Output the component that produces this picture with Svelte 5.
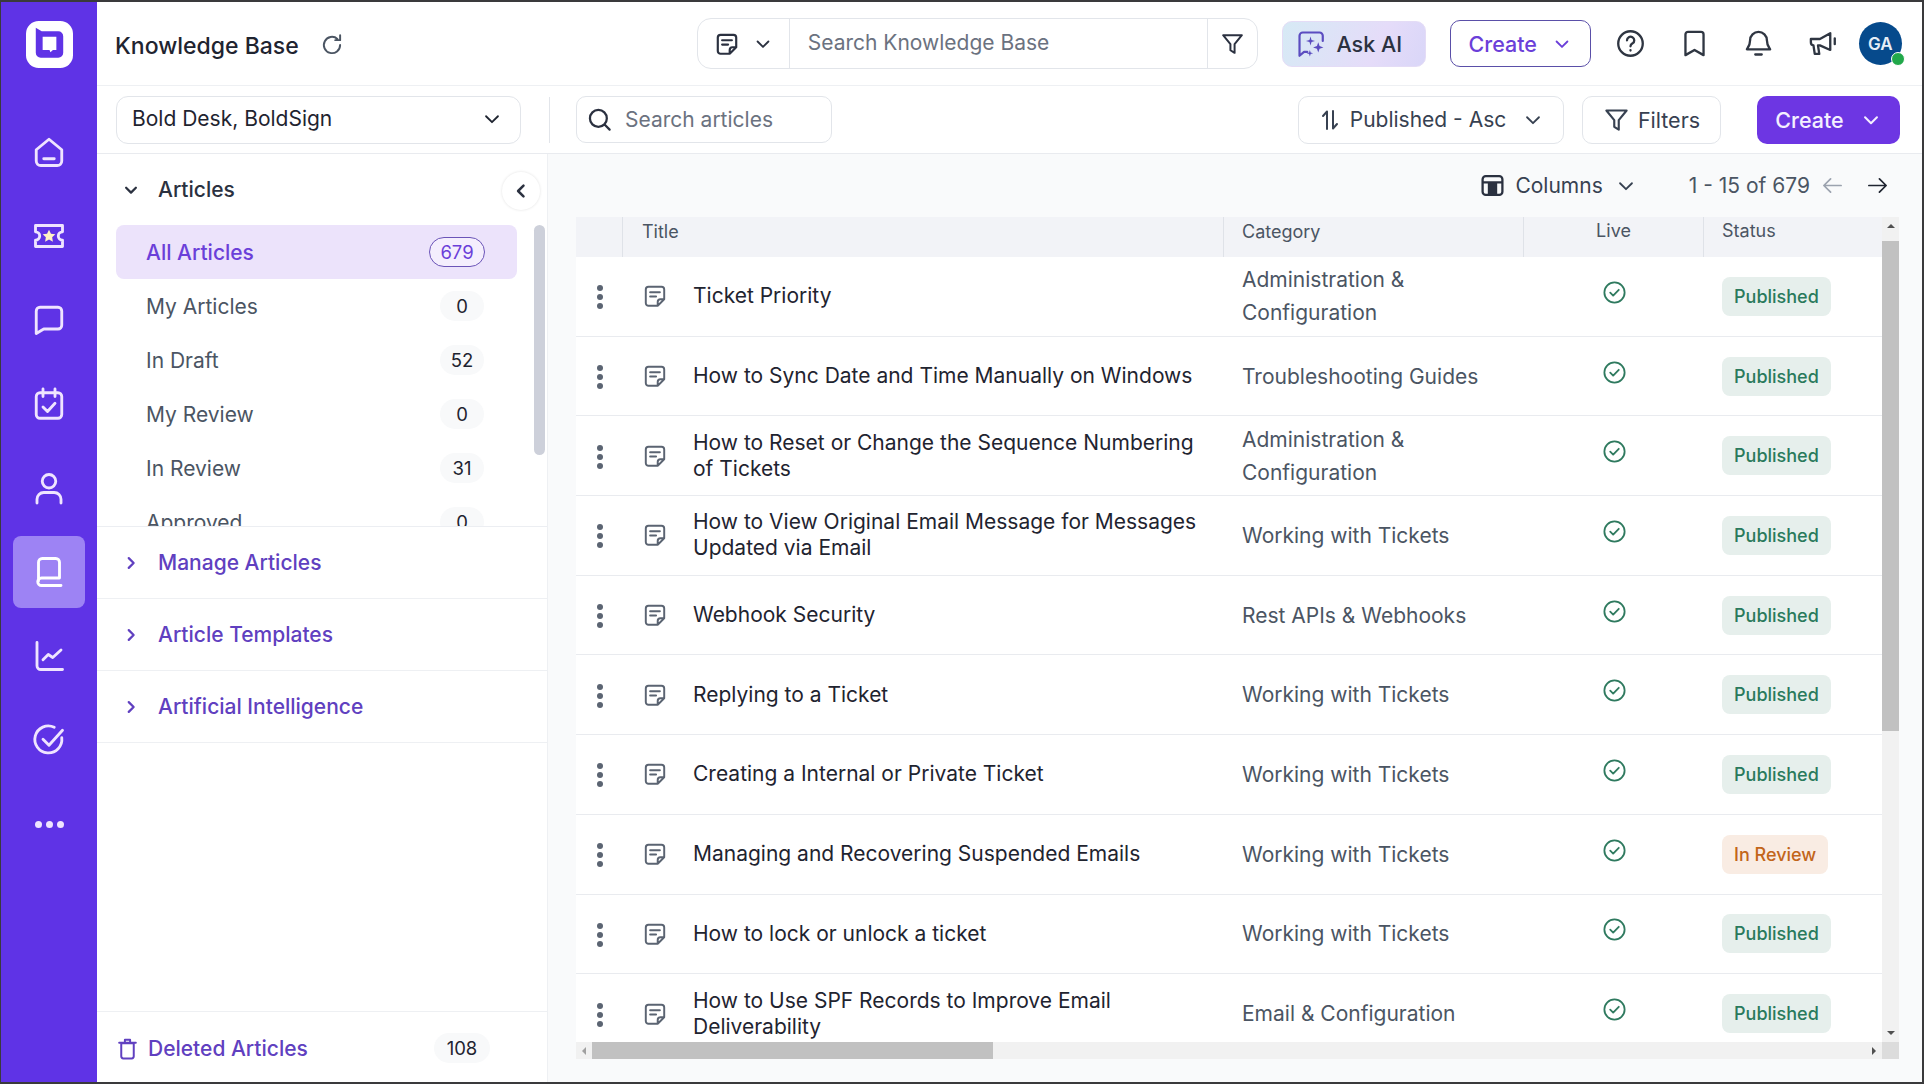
<script>
  // stroke icon paths, 24 unit box
  const paths = {
    home: "M3.5 10.5 12 3.5l8.5 7V18a3 3 0 0 1-3 3h-11a3 3 0 0 1-3-3zM8.5 16.5h7",
    ticket: "M3 5h18v4.2a2.8 2.8 0 0 0 0 5.6V19H3v-4.2a2.8 2.8 0 0 0 0-5.6z",
    chat: "M6 3.5h12A2.5 2.5 0 0 1 20.5 6v9.5A2.5 2.5 0 0 1 18 18H8.5l-5 3V6A2.5 2.5 0 0 1 6 3.5z",
    calendar: "M6 4.5h12A2.5 2.5 0 0 1 20.5 7v12a2.5 2.5 0 0 1-2.5 2.5H6A2.5 2.5 0 0 1 3.5 19V7A2.5 2.5 0 0 1 6 4.5zM8 2v5M16 2v5M8 14l3 3 5-5.5",
    user: "M12 3a4.5 4.5 0 1 1 0 9 4.5 4.5 0 0 1 0-9zM4 22v-2.5A4.5 4.5 0 0 1 8.5 15h7a4.5 4.5 0 0 1 4.5 4.5V22",
    book: "M5 18V5.5A2.5 2.5 0 0 1 7.5 3h9A2.5 2.5 0 0 1 19 5.5V16H7a2.5 2.5 0 0 0 0 5h13",
    chart: "M4 3v15.5A2.5 2.5 0 0 0 6.5 21H21M8 14.5l3.5-3.5 3 2L20 8",
    done: "M20.5 10.5a9 9 0 1 1-5-7M8 11.5l4 4 9-10",
    refresh: "M19.5 12a7.5 7.5 0 1 1-2.5-5.6M19.5 3v4.5H15",
    note: "M6 3.5h12A2.5 2.5 0 0 1 20.5 6v9l-6 6H6A2.5 2.5 0 0 1 3.5 18.5V6A2.5 2.5 0 0 1 6 3.5zM7.5 8.5h9M7.5 12.5h5.5M14.5 21v-3.5A2.5 2.5 0 0 1 17 15h3.5",
    down: "M5.5 9l6.5 6.5L18.5 9",
    right: "M9 5.5l6.5 6.5L9 18.5",
    left: "M15 5.5L8.5 12l6.5 6.5",
    funnel: "M3 4h18l-7 8.5V21l-4-2.5v-6z",
    search: "M11 3.5a7.5 7.5 0 1 1 0 15 7.5 7.5 0 0 1 0-15zM16.5 16.5 21 21",
    help: "M12 2.5a9.5 9.5 0 1 1 0 19 9.5 9.5 0 0 1 0-19zM9.3 9.5a2.8 2.8 0 1 1 4.3 2.4c-1 .6-1.6 1.2-1.6 2.3M12 17.2v.3",
    bookmark: "M7 3h10a2 2 0 0 1 2 2v16l-7-4-7 4V5a2 2 0 0 1 2-2z",
    bell: "M12 3a6.5 6.5 0 0 1 6.5 6.5c0 4 1.5 5.5 2.5 7H3c1-1.5 2.5-3 2.5-7A6.5 6.5 0 0 1 12 3zM9.5 20.5h5",
    megaphone: "M3 8.5h7L18 4v13l-8-3.5H8.5l1 6.5H6l-1-6.5H5a2.5 2.5 0 0 1-2-2.5zM21.5 8v4.5",
    sort: "M9 21V3.5L5 8M15 3v17.5l4-4.5",
    back: "M21 12H3.5M10 5l-7 7 7 7",
    forward: "M3 12h17.5M14 5l7 7-7 7",
    trash: "M6 7h12v12.5a2 2 0 0 1-2 2H8a2 2 0 0 1-2-2zM4 6.5h16M9.5 6V3.5h5V6",
    live: "M12 3a9 9 0 1 1 0 18 9 9 0 0 1 0-18zM8.2 12.2l2.6 2.6 5-5.2",
    askai: "M6 3.5h13A2.5 2.5 0 0 1 21.5 6v4M9.5 18.5H7l-3.5 3V6A2.5 2.5 0 0 1 6 3.5"
  };

  const rail = [
    { icon: "home" }, { icon: "ticket" }, { icon: "chat" }, { icon: "calendar" },
    { icon: "user" }, { icon: "book", active: true }, { icon: "chart" }, { icon: "done" }
  ];

  const folders = [
    { label: "All Articles", count: 679, active: true },
    { label: "My Articles", count: 0 },
    { label: "In Draft", count: 52 },
    { label: "My Review", count: 0 },
    { label: "In Review", count: 31 },
    { label: "Approved", count: 0 }
  ];

  const sections = ["Manage Articles", "Article Templates", "Artificial Intelligence"];

  const ADMIN = "Administration & Configuration";
  const TICKETS = "Working with Tickets";
  const rows = [
    { title: "Ticket Priority", category: ADMIN, status: "Published" },
    { title: "How to Sync Date and Time Manually on Windows", category: "Troubleshooting Guides", status: "Published" },
    { title: "How to Reset or Change the Sequence Numbering of Tickets", category: ADMIN, status: "Published" },
    { title: "How to View Original Email Message for Messages Updated via Email", category: TICKETS, status: "Published" },
    { title: "Webhook Security", category: "Rest APIs & Webhooks", status: "Published" },
    { title: "Replying to a Ticket", category: TICKETS, status: "Published" },
    { title: "Creating a Internal or Private Ticket", category: TICKETS, status: "Published" },
    { title: "Managing and Recovering Suspended Emails", category: TICKETS, status: "In Review" },
    { title: "How to lock or unlock a ticket", category: TICKETS, status: "Published" },
    { title: "How to Use SPF Records to Improve Email Deliverability", category: "Email & Configuration", status: "Published" }
  ];
</script>

{#snippet icon(name, size = 24, width = 2)}
  <svg class="icon" viewBox="0 0 24 24" style="width:{size}px;height:{size}px" fill="none" stroke="currentColor" stroke-width={width} stroke-linecap="round" stroke-linejoin="round">
    <path d={paths[name]} />
    {#if name === "ticket"}
      <path d="M12 7.8l1.3 2.7 2.9.4-2.1 2 .5 2.9-2.6-1.4-2.6 1.4.5-2.9-2.1-2 2.9-.4z" fill="#fff3c4" stroke="none" />
    {/if}
    {#if name === "askai"}
      <path d="M12 6.5l.8 2.7 2.7.8-2.7.8-.8 2.7-.8-2.7-2.7-.8 2.7-.8zM18 11l1 3 3 1-3 1-1 3-1-3-3-1 3-1zM11.5 17l.6 1.9 1.9.6-1.9.6-.6 1.9-.6-1.9-1.9-.6 1.9-.6z" fill="currentColor" stroke="none" />
    {/if}
  </svg>
{/snippet}

<div class="screen">
  <nav class="rail">
    <svg class="logo" viewBox="0 0 48 48">
      <rect width="48" height="48" rx="13" fill="#fff" />
      <path d="M10 7l6 3.5h17A5 5 0 0 1 38 15.5v17a5 5 0 0 1-5 5H15a5 5 0 0 1-5-5z" fill="#5f33e6" />
      <path d="M17 16h14v13.5h-3.5L25 32l-1-2.5h-7z" fill="#fff" />
    </svg>
    <div class="rail-list">
      {#each rail as item}
        <div class="rail-item" class:active={item.active}>{@render icon(item.icon, 36, 1.9)}</div>
      {/each}
      <div class="rail-item more"><i></i><i></i><i></i></div>
    </div>
  </nav>

  <div class="main">
    <header class="topbar">
      <div class="page-title">Knowledge Base</div>
      <span class="refresh">{@render icon("refresh", 26, 1.8)}</span>

      <div class="global-search">
        <div class="scope">
          {@render icon("note", 26, 2)}
          {@render icon("down", 20, 2.2)}
        </div>
        <div class="global-input">Search Knowledge Base</div>
        <div class="scope-filter">{@render icon("funnel", 25, 1.9)}</div>
      </div>

      <div class="ask-ai">
        <span class="ask-icon">{@render icon("askai", 31, 1.7)}</span>
        Ask AI
      </div>
      <div class="create-outline">Create {@render icon("down", 20, 2.2)}</div>

      <div class="top-icons">
        {@render icon("help", 31, 1.8)}
        {@render icon("bookmark", 31, 1.8)}
        {@render icon("bell", 31, 1.8)}
        {@render icon("megaphone", 31, 1.8)}
        <div class="avatar">GA<span class="online"></span></div>
      </div>
    </header>

    <div class="filterbar">
      <div class="brand-select">
        <span>Bold Desk, BoldSign</span>
        {@render icon("down", 22, 2)}
      </div>
      <div class="bar-divider"></div>
      <div class="article-search">
        {@render icon("search", 27, 2)}
        <span>Search articles</span>
      </div>
      <div class="sort-btn">
        {@render icon("sort", 24, 2)}
        <span>Published - Asc</span>
        {@render icon("down", 22, 2)}
      </div>
      <div class="filters-btn">
        {@render icon("funnel", 27, 1.9)}
        <span>Filters</span>
      </div>
      <div class="create-btn">Create {@render icon("down", 22, 2.2)}</div>
    </div>

    <div class="workspace">
      <aside class="pane">
        <div class="pane-head">
          <span class="caret">{@render icon("down", 18, 3)}</span>
          <span>Articles</span>
          <span class="collapse">{@render icon("left", 20, 3)}</span>
        </div>

        <div class="folders">
          <div class="folder-list">
            {#each folders as f}
              <div class="folder" class:active={f.active}>
                <span>{f.label}</span>
                <span class="count">{f.count}</span>
              </div>
            {/each}
          </div>
          <div class="pane-scroll"><div class="pane-thumb"></div></div>
        </div>

        {#each sections as s}
          <div class="section">
            <span class="caret">{@render icon("right", 18, 3)}</span>
            <span>{s}</span>
          </div>
        {/each}

        <div class="deleted">
          {@render icon("trash", 25, 1.9)}
          <span class="deleted-label">Deleted Articles</span>
          <span class="count">108</span>
        </div>
      </aside>

      <section class="content">
        <div class="table-tools">
          <svg class="columns-icon" viewBox="0 0 24 24">
            <rect x="2.5" y="3" width="19" height="18" rx="3" fill="none" stroke="currentColor" stroke-width="2.2" />
            <path d="M2.5 9h19M8.5 9v12M15.5 9v12" stroke="currentColor" stroke-width="2" />
            <rect x="8.5" y="9" width="7" height="12" fill="currentColor" />
          </svg>
          <span class="columns-label">Columns</span>
          {@render icon("down", 22, 2)}
          <span class="pager">1 - 15 of 679</span>
          <span class="arrow off">{@render icon("back", 23, 1.8)}</span>
          <span class="arrow">{@render icon("forward", 23, 1.8)}</span>
        </div>

        <div class="table-frame">
          <div class="table-body">
            <div class="table">
              <div class="row head">
                <div class="cell kebab"></div>
                <div class="cell title">Title</div>
                <div class="cell category">Category</div>
                <div class="cell live">Live</div>
                <div class="cell status">Status</div>
              </div>
              {#each rows as r}
                <div class="row">
                  <div class="cell kebab"><i></i><i></i><i></i></div>
                  <div class="cell title">
                    <span class="note">{@render icon("note", 26, 1.8)}</span>
                    <span class="title-text">{r.title}</span>
                  </div>
                  <div class="cell category">{r.category}</div>
                  <div class="cell live">{@render icon("live", 27, 1.6)}</div>
                  <div class="cell status">
                    <span class="badge" class:review={r.status === "In Review"}>{r.status}</span>
                  </div>
                </div>
              {/each}
            </div>
            <div class="vscroll">
              <span class="tri up"></span>
              <div class="vthumb"></div>
              <span class="tri dn"></span>
            </div>
          </div>
          <div class="hscroll">
            <span class="tri lf"></span>
            <div class="hthumb"></div>
            <span class="tri rt"></span>
            <div class="corner"></div>
          </div>
        </div>
      </section>
    </div>
  </div>
</div>

<style>
  :global(body) {
    margin: 0;
    background: #fff;
    font-family: Inter, "Liberation Sans", sans-serif;
  }
  .icon {
    flex: none;
    display: block;
  }
  .screen {
    display: flex;
    width: 1924px;
    height: 1084px;
    box-sizing: border-box;
    border: solid #3a3a3c;
    border-width: 2px 2px 2px 1px;
    overflow: hidden;
    color: #1f2937;
  }

  /* left rail */
  .rail {
    width: 96px;
    flex: none;
    background: #5f33e6;
    display: flex;
    flex-direction: column;
    align-items: center;
    padding-top: 19px;
    box-sizing: border-box;
  }
  .logo {
    width: 47px;
    height: 47px;
    flex: none;
  }
  .rail-list {
    display: flex;
    flex-direction: column;
    gap: 12px;
    margin-top: 48px;
  }
  .rail-item {
    width: 72px;
    height: 72px;
    border-radius: 8px;
    display: flex;
    align-items: center;
    justify-content: center;
    color: #efe4ff;
  }
  .rail-item.active {
    background: #9d83f4;
    color: #fff;
  }
  .more {
    gap: 4px;
  }
  .more i {
    width: 7px;
    height: 7px;
    border-radius: 50%;
    background: #efe4ff;
  }

  .main {
    flex: 1;
    min-width: 0;
    display: flex;
    flex-direction: column;
  }

  /* top bar */
  .topbar {
    height: 84px;
    flex: none;
    display: flex;
    align-items: center;
    padding-left: 18px;
    border-bottom: 1px solid #eef0f3;
    box-sizing: border-box;
  }
  .page-title {
    font-size: 23px;
    font-weight: 500;
    color: #1f2430;
    margin-top: 4px;
  }
  .refresh {
    margin-left: 20px;
    margin-top: 3px;
    color: #4b5563;
  }
  .global-search {
    margin-left: 352px;
    width: 561px;
    height: 51px;
    flex: none;
    display: flex;
    border: 1px solid #e2e5ea;
    border-radius: 14px;
    box-sizing: border-box;
  }
  .scope {
    width: 91px;
    display: flex;
    align-items: center;
    justify-content: center;
    gap: 13px;
    color: #2b3140;
    border-right: 1px solid #e2e5ea;
  }
  .global-input {
    flex: 1;
    display: flex;
    align-items: center;
    padding: 0 0 2px 18px;
    font-size: 21px;
    color: #6b7280;
  }
  .scope-filter {
    width: 49px;
    display: flex;
    align-items: center;
    justify-content: center;
    color: #2b3140;
    border-left: 1px solid #e2e5ea;
  }
  .ask-ai {
    margin-left: 24px;
    width: 144px;
    height: 46px;
    flex: none;
    display: flex;
    align-items: center;
    justify-content: center;
    gap: 10px;
    padding-right: 10px;
    border-radius: 10px;
    border: 1px solid #e4dcf6;
    box-sizing: border-box;
    background: linear-gradient(115deg, #d6eaf5, #e5dcf9 65%, #d9d6f8);
    font-size: 21.5px;
    font-weight: 500;
    color: #2b3140;
  }
  .ask-icon {
    color: #5b4cc0;
  }
  .create-outline {
    margin-left: 24px;
    width: 141px;
    height: 47px;
    flex: none;
    display: flex;
    align-items: center;
    justify-content: center;
    gap: 15px;
    border: 1.5px solid #5a4fa8;
    border-radius: 10px;
    box-sizing: border-box;
    font-size: 21.5px;
    font-weight: 500;
    color: #6b3fd9;
  }
  .top-icons {
    margin-left: 24px;
    display: flex;
    align-items: center;
    gap: 33px;
    color: #2f3642;
  }
  .avatar {
    position: relative;
    width: 43px;
    height: 43px;
    margin-left: -12px;
    border-radius: 50%;
    background: #064a8c;
    color: #e6eef7;
    display: flex;
    align-items: center;
    justify-content: center;
    font-size: 17px;
    font-weight: 600;
  }
  .online {
    position: absolute;
    right: -3px;
    bottom: -1px;
    width: 12px;
    height: 12px;
    border-radius: 50%;
    background: #21a84a;
    border: 1px solid #fff;
  }

  /* second bar */
  .filterbar {
    height: 68px;
    flex: none;
    display: flex;
    align-items: center;
    padding: 0 22px 0 19px;
    border-bottom: 1px solid #e9ebef;
    box-sizing: border-box;
    font-size: 21px;
    color: #374151;
  }
  .brand-select {
    width: 405px;
    height: 48px;
    display: flex;
    align-items: center;
    justify-content: space-between;
    padding: 0 17px 2px 15px;
    border: 1px solid #e2e5ea;
    border-radius: 12px;
    box-sizing: border-box;
    color: #1f2430;
  }
  .bar-divider {
    width: 1px;
    height: 46px;
    margin-left: 28px;
    background: #e2e5ea;
  }
  .article-search {
    margin-left: 26px;
    width: 256px;
    height: 47px;
    display: flex;
    align-items: center;
    gap: 12px;
    padding-left: 9px;
    border: 1px solid #e2e5ea;
    border-radius: 10px;
    box-sizing: border-box;
    color: #6b7280;
  }
  .article-search :global(.icon) {
    color: #2b3140;
  }
  .sort-btn {
    margin-left: auto;
    width: 266px;
    height: 48px;
    display: flex;
    align-items: center;
    justify-content: center;
    gap: 8px;
    border: 1px solid #e2e5ea;
    border-radius: 10px;
    box-sizing: border-box;
    white-space: nowrap;
  }
  .sort-btn span {
    margin-right: 8px;
  }
  .filters-btn {
    margin-left: 18px;
    width: 139px;
    height: 48px;
    display: flex;
    align-items: center;
    justify-content: center;
    gap: 8px;
    border: 1px solid #e2e5ea;
    border-radius: 10px;
    box-sizing: border-box;
    font-size: 21.5px;
  }
  .create-btn {
    margin-left: 36px;
    width: 143px;
    height: 48px;
    display: flex;
    align-items: center;
    justify-content: center;
    gap: 16px;
    background: #6d36e3;
    color: #f4efff;
    border-radius: 10px;
    font-size: 21.5px;
    font-weight: 500;
  }

  .workspace {
    flex: 1;
    min-height: 0;
    display: flex;
  }

  /* articles pane */
  .pane {
    width: 451px;
    flex: none;
    display: flex;
    flex-direction: column;
    border-right: 1px solid #eef0f3;
    box-sizing: border-box;
    font-size: 21px;
  }
  .pane-head {
    position: relative;
    height: 71px;
    flex: none;
    display: flex;
    align-items: center;
    padding-left: 25px;
    font-weight: 500;
    color: #2b3140;
  }
  .caret {
    width: 36px;
    flex: none;
    display: flex;
  }
  .pane-head .caret {
    color: #2b3140;
  }
  .collapse {
    position: absolute;
    right: 7px;
    top: 18px;
    width: 38px;
    height: 38px;
    border-radius: 50%;
    background: #fff;
    box-shadow: 0 0 3px rgba(0, 0, 0, 0.12);
    display: flex;
    align-items: center;
    justify-content: center;
    color: #2b3140;
  }
  .folders {
    height: 301px;
    flex: none;
    display: flex;
    overflow: hidden;
    border-bottom: 1px solid #eceef2;
  }
  .folder-list {
    width: 401px;
    margin-left: 19px;
    flex: none;
  }
  .folder {
    height: 54px;
    display: flex;
    align-items: center;
    justify-content: space-between;
    padding: 0 33px 0 30px;
    color: #4b5563;
    border-radius: 8px;
    box-sizing: border-box;
  }
  .folder.active {
    background: #ece3fb;
    color: #6b3fd9;
    font-weight: 500;
  }
  .count {
    min-width: 44px;
    height: 30px;
    padding: 0 4px;
    box-sizing: border-box;
    border-radius: 15px;
    background: #f8f9fa;
    display: flex;
    align-items: center;
    justify-content: center;
    font-size: 18.5px;
    font-weight: 400;
    color: #1f2430;
  }
  .folder.active .count {
    width: 56px;
    background: #f4eefd;
    border: 1px solid #6b54b8;
    color: #6b3fd9;
    margin-right: -1px;
  }
  .pane-scroll {
    margin-left: 17px;
    width: 11px;
    flex: none;
  }
  .pane-thumb {
    width: 11px;
    height: 230px;
    border-radius: 6px;
    background: #cdd0da;
  }
  .section {
    height: 72px;
    flex: none;
    display: flex;
    align-items: center;
    padding-left: 25px;
    box-sizing: border-box;
    font-weight: 500;
    color: #6040c0;
    border-bottom: 1px solid #eef0f3;
  }
  .section .caret {
    color: #6040c0;
  }
  .deleted {
    margin-top: auto;
    height: 71px;
    flex: none;
    display: flex;
    align-items: center;
    padding: 2px 0 0 18px;
    box-sizing: border-box;
    border-top: 1px solid #eef0f3;
    color: #6040c0;
    font-weight: 500;
  }
  .deleted-label {
    margin-left: 8px;
    flex: 1;
  }
  .deleted .count {
    width: 56px;
    margin-right: 57px;
  }

  /* table side */
  .content {
    flex: 1;
    min-width: 0;
    display: flex;
    flex-direction: column;
    background: #f9fafb;
    padding: 0 23px 0 28px;
    box-sizing: border-box;
  }
  .table-tools {
    height: 63px;
    flex: none;
    display: flex;
    align-items: center;
    justify-content: flex-end;
    padding-right: 10px;
    font-size: 21px;
    color: #374151;
  }
  .columns-icon {
    width: 25px;
    height: 25px;
    color: #2b3140;
  }
  .columns-label {
    margin: 0 12px 0 10px;
  }
  .pager {
    margin-left: 52px;
    color: #4b5563;
  }
  .arrow {
    margin-left: 11px;
    color: #1f2430;
  }
  .arrow.off {
    color: #9ca3af;
    margin-right: 11px;
  }
  .table-frame {
    display: flex;
    flex-direction: column;
    height: 842px;
    flex: none;
  }
  .table-body {
    flex: 1;
    min-height: 0;
    display: flex;
  }
  .table {
    flex: 1;
    min-width: 0;
    overflow: hidden;
    background: #fff;
  }
  .row {
    display: flex;
    height: 79.7px;
    box-sizing: border-box;
    border-bottom: 1px solid #e9ebef;
    background: #fff;
  }
  .row.head {
    height: 40px;
    background: #f2f3f7;
    border-bottom: none;
    font-size: 18px;
    color: #4b5563;
  }
  .cell {
    display: flex;
    align-items: center;
    box-sizing: border-box;
  }
  .row.head .cell {
    align-items: flex-start;
    padding-top: 3px;
    border-right: 1px solid #dfe2e8;
  }
  .row.head .cell:last-child {
    border-right: none;
  }
  .kebab {
    width: 47px;
    flex: none;
    flex-direction: column;
    justify-content: center;
    gap: 3px;
    padding: 2px 0 0 1px;
  }
  .kebab i {
    width: 6px;
    height: 6px;
    border-radius: 50%;
    background: #5b6472;
  }
  .title {
    width: 601px;
    flex: none;
    padding-left: 19px;
    font-size: 21px;
    line-height: 26px;
    color: #1f2430;
  }
  .row.head .title {
    font-size: 18px;
    line-height: 24px;
    color: #4b5563;
  }
  .note {
    color: #5b6472;
    margin-right: 25px;
    flex: none;
  }
  .title-text {
    padding-right: 22px;
  }
  .category {
    width: 300px;
    flex: none;
    padding: 0 20px 0 18px;
    font-size: 21px;
    line-height: 33px;
    color: #4b5563;
  }
  .row.head .category {
    font-size: 18px;
    line-height: 24px;
  }
  .live {
    width: 180px;
    flex: none;
    justify-content: center;
    color: #2f7a5f;
    padding-bottom: 8px;
  }
  .row.head .live {
    padding-bottom: 0;
    color: #4b5563;
  }
  .status {
    flex: 1;
    padding-left: 18px;
  }
  .badge {
    height: 39px;
    padding: 0 12px;
    display: flex;
    align-items: center;
    border-radius: 8px;
    background: #e6efec;
    color: #2a7a5c;
    font-size: 18px;
    font-weight: 500;
  }
  .badge.review {
    background: #f9ece3;
    color: #c2651a;
  }

  /* scrollbars */
  .vscroll {
    width: 17px;
    flex: none;
    display: flex;
    flex-direction: column;
    align-items: center;
    background: #f1f1f1;
  }
  .vthumb {
    width: 100%;
    height: 490px;
    margin-top: 13px;
    background: #c1c1c1;
  }
  .tri {
    width: 0;
    height: 0;
    flex: none;
    border-style: solid;
    border-color: transparent;
  }
  .tri.up {
    margin-top: 7px;
    border-width: 0 4px 4px;
    border-bottom-color: #505050;
  }
  .tri.dn {
    margin-top: auto;
    margin-bottom: 7px;
    border-width: 4px 4px 0;
    border-top-color: #505050;
  }
  .hscroll {
    height: 17px;
    flex: none;
    display: flex;
    align-items: center;
    background: #f1f1f1;
  }
  .tri.lf {
    margin-left: 6px;
    border-width: 4px 4px 4px 0;
    border-right-color: #a0a0a0;
  }
  .hthumb {
    width: 401px;
    height: 100%;
    margin-left: 6px;
    background: #c1c1c1;
  }
  .tri.rt {
    margin-left: auto;
    margin-right: 6px;
    border-width: 4px 0 4px 4px;
    border-left-color: #505050;
  }
  .corner {
    width: 17px;
    height: 100%;
    background: #dcdcdc;
  }
</style>
